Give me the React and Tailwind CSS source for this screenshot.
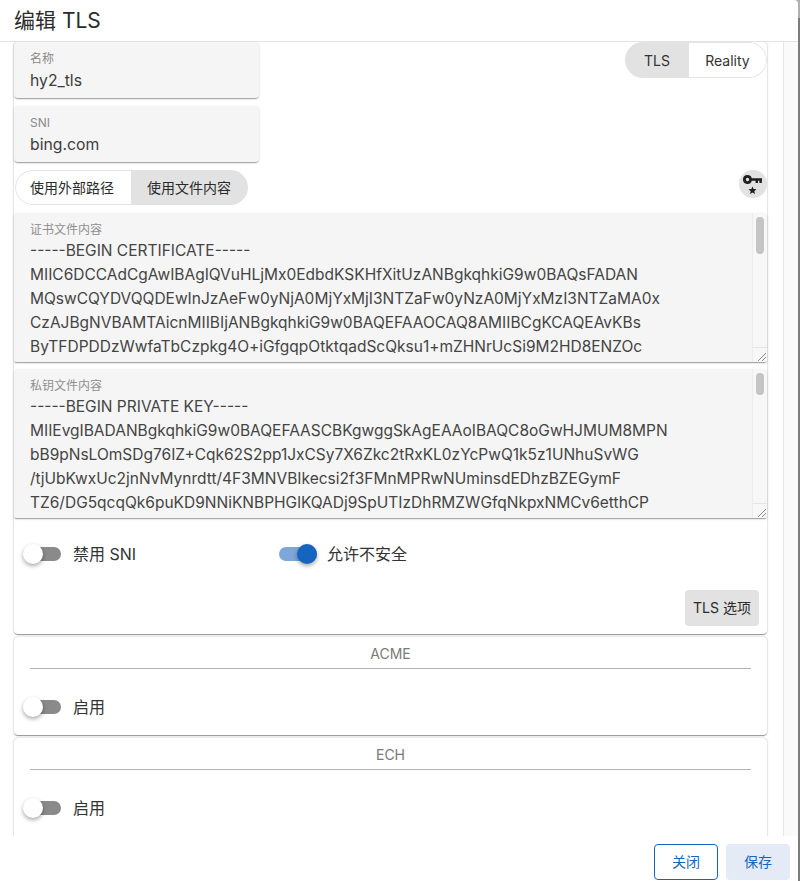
import React from "react";

const FONT = "font-['Inter','Noto_Sans_CJK_SC',sans-serif]";
const SHADOW = "shadow-[0_2px_1px_-1px_rgba(0,0,0,0.2),0_1px_1px_0_rgba(0,0,0,0.14),0_1px_3px_0_rgba(0,0,0,0.12)]";
const CARD = "shadow-[0_2px_1px_-1px_rgba(0,0,0,0.2),0_1px_1px_0_rgba(0,0,0,0.2),0_0_2px_0_rgba(0,0,0,0.3)]";

const CERT = [
  "-----BEGIN CERTIFICATE-----",
  "MIIC6DCCAdCgAwIBAgIQVuHLjMx0EdbdKSKHfXitUzANBgkqhkiG9w0BAQsFADAN",
  "MQswCQYDVQQDEwInJzAeFw0yNjA0MjYxMjI3NTZaFw0yNzA0MjYxMzI3NTZaMA0x",
  "CzAJBgNVBAMTAicnMIIBIjANBgkqhkiG9w0BAQEFAAOCAQ8AMIIBCgKCAQEAvKBs",
  "ByTFDPDDzWwfaTbCzpkg4O+iGfgqpOtktqadScQksu1+mZHNrUcSi9M2HD8ENZOc",
];
const KEY = [
  "-----BEGIN PRIVATE KEY-----",
  "MIIEvgIBADANBgkqhkiG9w0BAQEFAASCBKgwggSkAgEAAoIBAQC8oGwHJMUM8MPN",
  "bB9pNsLOmSDg76IZ+Cqk62S2pp1JxCSy7X6Zkc2tRxKL0zYcPwQ1k5z1UNhuSvWG",
  "/tjUbKwxUc2jnNvMynrdtt/4F3MNVBIkecsi2f3FMnMPRwNUminsdEDhzBZEGymF",
  "TZ6/DG5qcqQk6puKD9NNiKNBPHGlKQADj9SpUTIzDhRMZWGfqNkpxNMCv6etthCP",
];

function Field({ label, value }) {
  return (
    <div className={`h-[56px] w-[245px] rounded bg-[#f5f5f5] px-4 pt-[9px] ${SHADOW}`}>
      <div className="h-[16px] text-[12px] leading-[16px] text-[#8a8a8a]">{label}</div>
      <div className="mt-[2px] h-[24px] text-[15.75px] leading-[24px] text-[#3d3d3d]">{value}</div>
    </div>
  );
}

function Area({ label, lines, thumb }) {
  return (
    <div className={`flex h-[149px] overflow-hidden rounded-t rounded-b-[2px] bg-[#f5f5f5] ${SHADOW}`}>
      <div className="min-w-0 flex-1 pl-4 pt-[9px]">
        <div className="h-[16px] text-[12px] leading-[16px] text-[#8f8f8f]">{label}</div>
        <div className="mt-[1px] text-[15.5px] leading-[24px] text-[#444] whitespace-nowrap">
          {lines.map((l) => (
            <div key={l}>{l}</div>
          ))}
        </div>
      </div>
      <div className="flex h-full w-[15px] shrink-0 flex-col border-l border-[#ececec] bg-[#f7f7f7]">
        <div className="flex-1 px-[3px] pt-[4px]">
          <div className={`w-[8px] rounded-full bg-[#c4c4c4] ${thumb}`} />
        </div>
        <div className="flex h-[15px] items-end justify-end border-t border-[#e4e4e4]">
          <svg width="12" height="12" viewBox="0 0 12 12">
            <path d="M11 3L3 11M11 7L7 11" stroke="#8a8a8a" strokeWidth="1" fill="none" />
          </svg>
        </div>
      </div>
    </div>
  );
}

function Switch({ on, label, className = "" }) {
  return (
    <div className={`flex h-[38px] items-center ${className}`}>
      <div className="relative h-[38px] w-[58px] shrink-0">
        <div className={`absolute top-[12px] h-[14px] rounded-full ${on ? "left-[10px] w-[38px] bg-[#7ea6da]" : "left-[12px] w-[34px] bg-[#8a8a8a]"}`} />
        <div
          className={`absolute top-[9px] h-[20px] w-[20px] rounded-full shadow-[0_2px_4px_0_rgba(0,0,0,0.35)] ${
            on ? "left-[28px] bg-[#1565c0]" : "left-[8px] bg-white"
          }`}
        />
      </div>
      <span className="text-[16px] leading-[24px] text-[#333]">{label}</span>
    </div>
  );
}

function SectionCard({ title, className = "" }) {
  return (
    <section className={`${CARD} rounded bg-white ${className}`}>
      <div className="mx-4 flex h-[32px] items-end justify-center border-b border-[#b4b4b4] pb-[5px] text-[14px] leading-[18px] text-[#7a7a7a]">
        {title}
      </div>
      <div className="pl-[1px] pt-[19px]">
        <Switch label="启用" />
      </div>
    </section>
  );
}

function KeyStar() {
  return (
    <svg width="24" height="24" viewBox="0 0 24 24" fill="#1f1f1f">
      <path
        fillRule="evenodd"
        d="M6.5 3a4.5 4.5 0 0 1 4.3 3.2H21v2.6h-.2V11h-2.4V8.8h-1.4V11h-2.4V8.8h-3.8A4.5 4.5 0 1 1 6.5 3zm0 2.8a1.7 1.7 0 1 0 0 3.4 1.7 1.7 0 0 0 0-3.4z"
      />
      <path d="M11.5 14.5l1.1 2.6 2.9.2-2.2 1.9.7 2.8-2.5-1.5-2.5 1.5.7-2.8-2.2-1.9 2.9-.2z" />
    </svg>
  );
}

export default function App() {
  return (
    <div className={`h-[881px] w-[800px] overflow-hidden bg-[linear-gradient(#b0b0b0_0,#b0b0b0_18px,#7d7d7d_18px)] ${FONT}`}>
      <div className="flex h-[881px] w-[798px] flex-col rounded-tr bg-white">
        <header className="h-[42px] shrink-0 border-b border-[#e3e3e3] pl-[14px] text-[21px] leading-[41px] text-[#2b2b2b]">
          编辑 TLS
        </header>

        <div className="flex h-[794px] shrink-0">
          <div className="min-w-0 flex-1 overflow-hidden pl-[14px] pr-[16px]">
            <section className={`h-[592px] rounded bg-white ${CARD}`}>
              <div className="flex items-start justify-between">
                <div className="flex flex-col gap-2">
                  <Field label="名称" value="hy2_tls" />
                  <Field label="SNI" value="bing.com" />
                </div>
                <div className="flex h-[36px] overflow-hidden rounded-full text-[14px] leading-[37px] text-[#333]">
                  <div className="w-[64px] bg-[#e2e2e2] text-center">TLS</div>
                  <div className="w-[78px] rounded-r-full border border-l-0 border-[#e4e4e4] text-center leading-[36px]">Reality</div>
                </div>
              </div>

              <div className="mt-2 flex items-start justify-between">
                <div className="ml-[1px] flex h-[35px] overflow-hidden rounded-full text-[14px] leading-[35px] text-[#2b2b2b]">
                  <div className="w-[116px] rounded-l-full border border-r-0 border-[#e4e4e4] pl-[14px] leading-[33px]">使用外部路径</div>
                  <div className="w-[117px] bg-[#e2e2e2] pl-[16px]">使用文件内容</div>
                </div>
                <div className="flex h-[28px] w-[28px] items-center justify-center rounded-full bg-[#e2e2e2]">
                  <KeyStar />
                </div>
              </div>

              <div className="mt-2 flex flex-col gap-[7px]">
                <Area label="证书文件内容" lines={CERT} thumb="h-[37px]" />
                <Area label="私钥文件内容" lines={KEY} thumb="h-[22px]" />
              </div>

              <div className="mt-[17px] flex pl-[1px]">
                <Switch label="禁用 SNI" className="w-[254px]" />
                <Switch on label="允许不安全" />
              </div>

              <div className="mt-[17px] flex justify-end pr-2">
                <div className="h-[36px] w-[74px] rounded bg-[#e2e2e2] text-center text-[14px] leading-[36px] text-[#2b2b2b]">
                  TLS 选项
                </div>
              </div>
            </section>

            <SectionCard title="ACME" className="mt-[3px] h-[98px]" />
            <SectionCard title="ECH" className="mt-[3px] h-[110px]" />
          </div>
          <div className="w-[15px] shrink-0 border-l border-[#e6e6e6] bg-[#fafafa]" />
        </div>

        <footer className="flex flex-1 items-start justify-end gap-2 pr-2 pt-2 text-[14px] leading-[20px]">
          <button className="h-[36px] w-[64px] rounded border border-[#1565c0] pb-[1px] text-[#1565c0]">关闭</button>
          <button className="h-[36px] w-[64px] rounded bg-[#e4eaf6] pb-[1px] text-[#1565c0]">保存</button>
        </footer>
      </div>
    </div>
  );
}
